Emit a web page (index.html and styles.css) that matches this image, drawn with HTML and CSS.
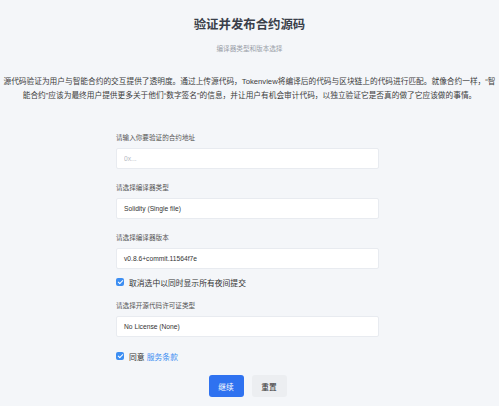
FILE: index.html
```html
<!DOCTYPE html>
<html lang="en">
<head>
  <meta charset="UTF-8">
  <title>验证并发布合约源码</title>
  <link rel="stylesheet" href="styles.css">
</head>
<body>
  <div class="page">
    <h1 class="title">验证并发布合约源码</h1>
    <p class="subtitle">编译器类型和版本选择</p>

    <p class="intro">源代码验证为用户与智能合约的交互提供了透明度。通过上传源代码，Tokenview将编译后的代码与区块链上的代码进行匹配。就像合约一样，“智能合约”应该为最终用户提供更多关于他们“数字签名”的信息，并让用户有机会审计代码，以独立验证它是否真的做了它应该做的事情。</p>

    <!-- Verify form -->
    <form class="verify-form">
      <div class="form-field">
        <label for="address">请输入你要验证的合约地址</label>
        <input type="text" id="address" placeholder="0x...">
      </div>
      <div class="form-field">
        <label for="compilerType">请选择编译器类型</label>
        <div class="select" id="compilerType">Solidity (Single file)</div>
      </div>
      <div class="form-field tight">
        <label for="compilerVersion">请选择编译器版本</label>
        <div class="select" id="compilerVersion">v0.8.6+commit.11564f7e</div>
      </div>
      <div class="check-row">
        <span class="checkbox"></span>
        <span>取消选中以同时显示所有夜间提交</span>
      </div>
      <div class="form-field">
        <label for="license">请选择开源代码许可证类型</label>
        <div class="select" id="license">No License (None)</div>
      </div>
      <div class="check-row agree">
        <span class="checkbox"></span>
        <span>同意 <a href="#">服务条款</a></span>
      </div>
      <div class="actions">
        <button type="submit" class="btn primary">继续</button>
        <button type="reset" class="btn">重置</button>
      </div>
    </form>
  </div>
</body>
</html>
```

FILE: styles.css
```css
/* Global Styles */
body {
  background-color: #f4f6f9;
  font-family: "Liberation Sans", "Noto Sans CJK SC", sans-serif;
  color: #333;
  margin: 0;
  padding: 0;
}

.page {
  padding: 17px 2px 0;
  text-align: center;
}

/* Headings */
.title {
  margin: 0;
  font-size: 12.4px;
  line-height: 16px;
  font-weight: bold;
  color: #3a3f4a;
}

.subtitle {
  margin: 11px 0 0;
  font-size: 6.6px;
  line-height: 10px;
  color: #9aa0a8;
}

.intro {
  margin: 21px 0 0;
  font-size: 7.7px;
  line-height: 14px;
  color: #3c3c3c;
}

/* Form */
.verify-form {
  width: 263px;
  padding-right: 4px;
  margin: 29px auto 0;
  text-align: left;
}

.form-field {
  display: flex;
  flex-direction: column;
  margin-bottom: 13px;
}

.form-field.tight {
  margin-bottom: 7px;
}

.form-field label {
  font-size: 6.6px;
  line-height: 12px;
  color: #555;
  margin-bottom: 4px;
}

.form-field input,
.select {
  box-sizing: border-box;
  height: 21px;
  padding: 0 7px;
  font-family: inherit;
  font-size: 6.7px;
  line-height: 19px;
  color: #333;
  background-color: #fff;
  border: 1px solid #e8ebf0;
  border-radius: 2px;
  outline: none;
}

.form-field input::placeholder {
  color: #b5bac2;
}

/* Checkbox rows */
.check-row {
  display: flex;
  align-items: center;
  gap: 5px;
  height: 12px;
  font-size: 7.8px;
  color: #333;
  margin-bottom: 12px;
}

.check-row.agree {
  margin-bottom: 13px;
}

.checkbox {
  position: relative;
  width: 8px;
  height: 8px;
  border-radius: 2px;
  background-color: #3d8ef2;
}

.checkbox::after {
  content: "";
  position: absolute;
  left: 2.6px;
  top: 1px;
  width: 2px;
  height: 4px;
  border: solid #fff;
  border-width: 0 1px 1px 0;
  transform: rotate(45deg);
}

.check-row a {
  color: #3d8ef2;
  text-decoration: none;
}

/* Buttons */
.actions {
  display: flex;
  justify-content: center;
  gap: 8px;
}

.btn {
  width: 35px;
  height: 22px;
  padding: 0;
  border: none;
  border-radius: 3px;
  font-family: inherit;
  font-size: 7.7px;
  color: #333;
  background-color: #eceef1;
  cursor: pointer;
}

.btn.primary {
  background-color: #2f72f0;
  color: #fff;
}
```
